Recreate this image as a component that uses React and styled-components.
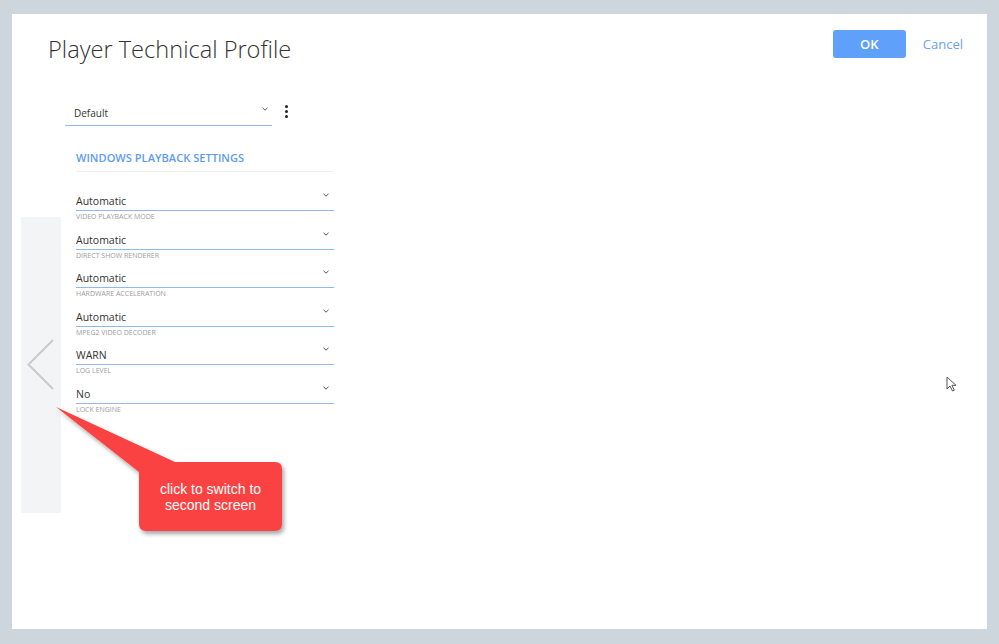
import React from "react";
import styled, { createGlobalStyle } from "styled-components";

const Global = createGlobalStyle`
  html, body { margin: 0; padding: 0; }
  body { background: #cdd5dd; font-family: "Open Sans", "Noto Sans", sans-serif; }
`;

const Page = styled.div`
  width: 999px;
  height: 644px;
  box-sizing: border-box;
  padding: 14px 12px 0 12px;
  background: #cdd5dd;
  overflow: hidden;
`;

const Panel = styled.div`
  position: relative;
  width: 975px;
  height: 615px;
  background: #ffffff;
  display: flex;
  flex-direction: column;
`;

const Header = styled.div`
  height: 58px;
  box-sizing: border-box;
  padding: 16px 24px 0 36px;
  display: flex;
  justify-content: space-between;
  align-items: flex-start;
`;

const Title = styled.h1`
  margin: 3px 0 0 0;
  font-family: "Open Sans", sans-serif;
  font-weight: 300;
  font-size: 23.6px;
  line-height: 32px;
  color: #333;
`;

const Actions = styled.div`
  display: flex;
  align-items: center;
  gap: 17px;
`;

const OkButton = styled.button`
  width: 73px;
  height: 28px;
  border: none;
  border-radius: 3px;
  background: #5fa0fb;
  color: #fff;
  font-family: "Open Sans", sans-serif;
  font-size: 13px;
  font-weight: 600;
  padding: 0;
`;

const CancelLink = styled.span`
  font-family: "Open Sans", sans-serif;
  font-size: 13px;
  color: #6aa3ef;
`;

const Body = styled.div`
  display: flex;
  align-items: flex-start;
  padding-left: 9px;
`;

const SideNav = styled.div`
  width: 40px;
  height: 296px;
  margin-top: 145px;
  background: #f2f4f6;
  display: flex;
  align-items: center;
  justify-content: center;
`;

const FormColumn = styled.div`
  margin-left: 4px;
  display: flex;
  flex-direction: column;
`;

const ProfileRow = styled.div`
  margin-top: 29px;
  display: flex;
  align-items: center;
`;

const ProfileSelect = styled.div`
  width: 207px;
  height: 25px;
  box-sizing: border-box;
  border-bottom: 1px solid #8fb9f5;
  display: flex;
  align-items: center;
  justify-content: space-between;
  padding: 0 4px 1px 9px;
  font-size: 10px;
  color: #333;
`;

const Kebab = styled.div`
  margin-left: 13px;
  margin-bottom: 4px;
  display: flex;
  flex-direction: column;
  gap: 2px;
  & > span {
    width: 3px;
    height: 3px;
    border-radius: 50%;
    background: #222;
  }
`;

const Section = styled.div`
  margin-left: 11px;
  width: 258px;
`;

const SectionTitle = styled.div`
  margin-top: 24px;
  padding-bottom: 5px;
  border-bottom: 1px solid #eeeeee;
  font-size: 11px;
  line-height: 16px;
  font-weight: 600;
  color: #5b9cf2;
  letter-spacing: 0.05px;
`;

const Fields = styled.div`
  margin-top: 19px;
  display: flex;
  flex-direction: column;
`;

const Field = styled.div`
  height: 38.6px;
`;

const ValueRow = styled.div`
  height: 19px;
  border-bottom: 1px solid #8fb9f5;
  display: flex;
  justify-content: space-between;
  align-items: flex-start;
`;

const Value = styled.span`
  padding-top: 1px;
  font-size: 10.5px;
  line-height: 18px;
  color: #333;
`;

const Label = styled.div`
  margin-top: 1px;
  font-size: 7px;
  line-height: 9px;
  color: #9b9b9b;
  text-transform: uppercase;
`;

const ChevronBox = styled.span`
  display: flex;
  margin-top: ${(p) => p.$top || 0}px;
  margin-right: ${(p) => p.$right || 0}px;
`;

const Callout = styled.svg`
  position: absolute;
  left: 38px;
  top: 386px;
  overflow: visible;
`;

const CalloutText = styled.div`
  position: absolute;
  left: 127px;
  top: 448px;
  width: 143px;
  height: 69px;
  display: flex;
  align-items: center;
  justify-content: center;
  text-align: center;
  font-family: "Liberation Sans", Arial, sans-serif;
  font-size: 14px;
  line-height: 16px;
  color: #fff;
`;

const Cursor = styled.svg`
  position: absolute;
  left: 934px;
  top: 362px;
`;

const Chevron = ({ top, right }) => (
  <ChevronBox $top={top} $right={right}>
    <svg width="6" height="4" viewBox="0 0 6 4">
      <polyline points="0.5,0.8 3,3.2 5.5,0.8" fill="none" stroke="#555" strokeWidth="1" />
    </svg>
  </ChevronBox>
);

const fields = [
  ["Automatic", "Video Playback Mode"],
  ["Automatic", "Direct Show Renderer"],
  ["Automatic", "Hardware Acceleration"],
  ["Automatic", "MPEG2 Video Decoder"],
  ["WARN", "Log Level"],
  ["No", "Lock Engine"],
];

export default function App() {
  return (
    <Page>
      <Global />
      <Panel>
        <Header>
          <Title>Player Technical Profile</Title>
          <Actions>
            <OkButton>OK</OkButton>
            <CancelLink>Cancel</CancelLink>
          </Actions>
        </Header>
        <Body>
          <SideNav>
            <svg width="28" height="52" viewBox="0 0 28 52">
              <polyline points="26,1 1.5,25.5 26,50" fill="none" stroke="#cacaca" strokeWidth="2" />
            </svg>
          </SideNav>
          <FormColumn>
            <ProfileRow>
              <ProfileSelect>
                <span>Default</span>
                <Chevron top={-8} right={0} />
              </ProfileSelect>
              <Kebab>
                <span />
                <span />
                <span />
              </Kebab>
            </ProfileRow>
            <Section>
              <SectionTitle>WINDOWS PLAYBACK SETTINGS</SectionTitle>
              <Fields>
                {fields.map(([v, l], i) => (
                  <Field key={i}>
                    <ValueRow>
                      <Value>{v}</Value>
                      <Chevron top={2} right={5} />
                    </ValueRow>
                    <Label>{l}</Label>
                  </Field>
                ))}
              </Fields>
            </Section>
          </FormColumn>
        </Body>
        <Callout width="250" height="150" viewBox="0 0 250 150">
          <defs>
            <filter id="sh" x="-20%" y="-20%" width="150%" height="150%">
              <feDropShadow dx="2" dy="3" stdDeviation="2" floodColor="#000" floodOpacity="0.35" />
            </filter>
          </defs>
          <path
            d="M6,7 L125,62 L225,62 Q232,62 232,69 L232,124 Q232,131 225,131 L96,131 Q89,131 89,124 L89,72 Z"
            fill="#fa4343"
            filter="url(#sh)"
          />
        </Callout>
        <CalloutText>
          click to switch to
          <br />
          second screen
        </CalloutText>
        <Cursor width="12" height="18" viewBox="0 0 12 18">
          <path d="M1,1 L1,13 L4,10 L6.5,15 L8.3,14.2 L5.9,9.3 L10,9.3 Z" fill="#fff" stroke="#555" strokeWidth="1" strokeLinejoin="round" />
        </Cursor>
      </Panel>
    </Page>
  );
}
